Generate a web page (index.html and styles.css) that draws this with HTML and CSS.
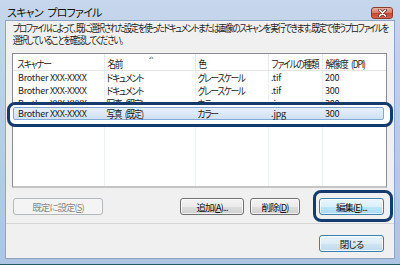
FILE: index.html
```html
<!DOCTYPE html>
<html lang="ja">
<head>
    <meta charset="UTF-8">
    <title>スキャン プロファイル</title>
    <link rel="stylesheet" href="styles.css">
</head>
<body>
    <div class="window">
        <div class="titlebar">
            <span class="title">スキャン プロファイル</span>
            <span class="close">
                <svg width="11" height="8" viewBox="0 0 11 8"><path d="M2.5 1 L8.5 7 M8.5 1 L2.5 7" stroke="#5b2a22" stroke-width="3" stroke-linecap="round"/><path d="M2.5 1 L8.5 7 M8.5 1 L2.5 7" stroke="#fff" stroke-width="1.6" stroke-linecap="round"/></svg>
            </span>
        </div>

        <div class="client">
            <p class="desc">プロファイルによって、既に選択された設定を使ったドキュメントまたは画像のスキャンを実行できます。既定で使うプロファイルを<br>選択していることを確認してください。</p>

            <div class="list">
                <div class="row head">
                    <span class="ja">スキャナー</span>
                    <span class="ja sorted">名前</span>
                    <span class="ja">色</span>
                    <span class="ja">ファイルの種類</span>
                    <span class="ja">解像度 (DPI)</span>
                </div>
                <div class="row">
                    <span>Brother XXX-XXXX</span>
                    <span class="ja">ドキュメント</span>
                    <span class="ja">グレースケール</span>
                    <span>.tif</span>
                    <span>200</span>
                </div>
                <div class="row">
                    <span>Brother XXX-XXXX</span>
                    <span class="ja">ドキュメント</span>
                    <span class="ja">グレースケール</span>
                    <span>.tif</span>
                    <span>300</span>
                </div>
                <div class="row">
                    <span>Brother XXX-XXXX</span>
                    <span class="ja">写真 (既定)</span>
                    <span class="ja">カラー</span>
                    <span>.jpg</span>
                    <span>300</span>
                </div>
                <div class="row sel">
                    <span>Brother XXX-XXXX</span>
                    <span class="ja">写真 (既定)</span>
                    <span class="ja">カラー</span>
                    <span>.jpg</span>
                    <span>300</span>
                </div>
            </div>

            <div class="actions">
                <button class="btn disabled w-set">既定に設定(<u>S</u>)</button>
                <span class="spacer"></span>
                <button class="btn w-add">追加(<u>A</u>)...</button>
                <button class="btn w-del">削除(<u>D</u>)</button>
                <button class="btn hot w-edit ringed">編集(<u>E</u>)...</button>
            </div>

            <div class="footer">
                <button class="btn default w-edit">閉じる</button>
            </div>
        </div>
    </div>
</body>
</html>
```

FILE: styles.css
```css
html, body {
    margin: 0;
    padding: 0;
}

body {
    width: 400px;
    height: 265px;
    overflow: hidden;
    font-family: "Noto Sans CJK JP", sans-serif;
    font-size: 9px;
    font-feature-settings: "palt";
    color: #000;
}

.window {
    height: 265px;
    box-sizing: border-box;
    padding: 0 5px 5px 5px;
    border-bottom: 1px solid #235a6a;
    background: linear-gradient(#c6d7ec, #b9cee8 40%, #adc6e4);
    display: flex;
    flex-direction: column;
}

.titlebar {
    height: 20px;
    display: flex;
    justify-content: space-between;
    padding-left: 2px;
}

.title {
    font-size: 11px;
    letter-spacing: -0.8px;
    word-spacing: 3px;
    line-height: 24px;
    color: #111;
}

.close {
    width: 20px;
    height: 10px;
    margin: 7px 2px 0 0;
    border: 1px solid #8e3b2e;
    border-radius: 3px;
    background: linear-gradient(#eab1a4, #d9735f 50%, #c7432f 51%, #d4644c);
    display: flex;
    align-items: center;
    justify-content: center;
}

.client {
    flex: 1;
    background: #f0f0f0;
    border: 1px solid #8ea6c4;
    display: flex;
    flex-direction: column;
    overflow: hidden;
}

/* Meiryo UI is much narrower than Noto, so the text is squeezed */
.desc {
    width: 460px;
    margin: 0;
    padding: 1px 0 0 8px;
    font-size: 10px;
    line-height: 12px;
    letter-spacing: -1.5px;
    color: #222;
    white-space: nowrap;
    transform: scaleX(0.83);
    transform-origin: 0 0;
}

.ja {
    font-size: 10px;
    letter-spacing: -1.3px;
    word-spacing: 3px;
    transform: scaleX(0.85);
    transform-origin: 0 50%;
}

/* list view */
.list {
    height: 135px;
    box-sizing: border-box;
    margin: 7px 7px 0 6px;
    border: 1px solid #8a8e94;
    border-bottom: 2px solid #c4c4c4;
    background:
        linear-gradient(#edf2f9, #edf2f9) 91px 0 / 1px 100% no-repeat,
        linear-gradient(#edf2f9, #edf2f9) 182px 0 / 1px 100% no-repeat,
        linear-gradient(#edf2f9, #edf2f9) 255px 0 / 1px 100% no-repeat,
        linear-gradient(#edf2f9, #edf2f9) 309px 0 / 1px 100% no-repeat,
        #fff;
}

.row {
    display: grid;
    grid-template-columns: 91px 91px 73px 54px 1fr;
    height: 13px;
    line-height: 13px;
    white-space: nowrap;
    color: #222;
    letter-spacing: -0.25px;
}

.row span {
    padding-left: 5px;
}

.row span + span {
    padding-left: 3px;
}

.head {
    height: 16px;
    line-height: 19px;
    border-bottom: 1px solid #e5e5e5;
    background: #fff;
}

.head span + span {
    border-left: 1px solid #e3e6ea;
}

.sorted {
    position: relative;
}

.sorted::before {
    content: "";
    position: absolute;
    top: 2px;
    left: 52px;
    width: 5px;
    height: 3px;
    background: linear-gradient(135deg, transparent 50%, #97a6ba 50%) left / 50% 100% no-repeat,
                linear-gradient(225deg, transparent 50%, #97a6ba 50%) right / 50% 100% no-repeat;
}

.sel {
    position: relative;
    z-index: 1;
    margin: -3px 2px 0 0;
    height: 13px;
}

/* highlight box */
.sel::after {
    content: "";
    position: absolute;
    inset: 0;
    z-index: -1;
    border: 1px solid #7fa8d8;
    border-radius: 2px;
    background: linear-gradient(#e7f0fb, #cfe1f6);
}

/* annotation ring */
.sel::before {
    content: "";
    position: absolute;
    top: -5px;
    bottom: -7px;
    left: -6px;
    right: -9px;
    z-index: -1;
    border: 3px solid #153b6e;
    border-radius: 8px;
    background: #fff;
}

/* buttons */
.actions {
    display: flex;
    gap: 6px;
    margin: 10px 10px 0 7px;
}

.spacer {
    flex: 1;
}

.btn {
    font: inherit;
    font-size: 9.5px;
    height: 17px;
    padding: 0;
    border: 1px solid #707070;
    border-radius: 3px;
    background: linear-gradient(#f3f3f3, #ebebeb 50%, #dddddd 51%, #d0d0d0);
    box-shadow: inset 0 0 0 1px rgba(255, 255, 255, 0.7);
    color: #111;
    letter-spacing: -1px;
    line-height: 14px;
}

.btn u {
    text-decoration-thickness: 1px;
}

.btn.disabled {
    border-color: #b5b9bc;
    background: #f4f4f4;
    box-shadow: none;
    color: #8a8a8a;
}

.btn.hot {
    border-color: #3c7fb1;
    background: linear-gradient(#eaf6fd, #d9f0fc 50%, #bee6fd 51%, #a7d9f5);
}

.btn.default {
    border-color: #3c7fb1;
    background: linear-gradient(#e9f3fa, #dcecf7 50%, #cde4f3 51%, #c0dcef);
}

.w-set { width: 90px; }
.w-add { width: 64px; }
.w-del { width: 50px; }
.w-edit { width: 65px; }

.ringed {
    position: relative;
    margin-left: 13px;
}

.ringed::after {
    content: "";
    position: absolute;
    top: -9px;
    bottom: -8px;
    left: -7px;
    right: -10px;
    border: 3px solid #153b6e;
    border-radius: 8px;
}

.footer {
    flex: 1;
    margin-top: 8px;
    border-top: 1px solid #d6d6d6;
    display: flex;
    justify-content: flex-end;
    padding: 11px 10px 0 0;
}
```
